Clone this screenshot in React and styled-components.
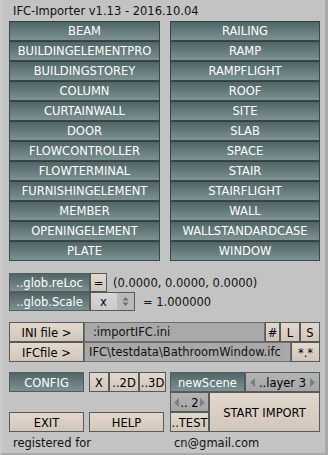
import styled, { createGlobalStyle, css } from 'styled-components';

const LEFT = [
  'BEAM', 'BUILDINGELEMENTPRO', 'BUILDINGSTOREY', 'COLUMN', 'CURTAINWALL', 'DOOR',
  'FLOWCONTROLLER', 'FLOWTERMINAL', 'FURNISHINGELEMENT', 'MEMBER', 'OPENINGELEMENT', 'PLATE',
];
const RIGHT = [
  'RAILING', 'RAMP', 'RAMPFLIGHT', 'ROOF', 'SITE', 'SLAB',
  'SPACE', 'STAIR', 'STAIRFLIGHT', 'WALL', 'WALLSTANDARDCASE', 'WINDOW',
];

const GlobalStyle = createGlobalStyle`
  html, body {
    margin: 0;
    padding: 0;
    background: #c3c3c3;
  }
  * {
    box-sizing: border-box;
  }
`;

const TONES = {
  teal: css`
    background: linear-gradient(#4f6566, #7c9192);
    color: #ffffff;
  `,
  beige: css`
    background: linear-gradient(#e3d8cd, #d2c6ba);
    color: #000000;
  `,
  gray: css`
    background: linear-gradient(#b4b4b4, #a6a6a6);
    color: #000000;
  `,
  light: css`
    background: linear-gradient(#d6d6d6, #cacaca);
    color: #000000;
  `,
};

const Panel = styled.div`
  width: 328px;
  height: 455px;
  background: #c3c3c3;
  border-left: 2px solid #cacaca;
  border-right: 3px solid #a9a9a9;
  border-bottom: 2px solid #a9a9a9;
  padding-left: 7px;
  font-family: 'DejaVu Sans', 'Liberation Sans', sans-serif;
  font-size: 11.5px;
  color: #111;
`;

const Title = styled.div`
  height: 21px;
  padding: 4px 0 0 4px;
  line-height: 14px;
`;

const ElementGrid = styled.div`
  display: grid;
  grid-template-columns: 151px 150px;
  column-gap: 10px;
`;

const Column = styled.div`
  display: flex;
  flex-direction: column;
`;

const ElemButton = styled.div`
  height: 20px;
  border: 1px solid #3a4748;
  border-top-color: #34403f;
  ${TONES.teal}
  text-align: center;
  line-height: 17px;
  padding-top: 1px;
  white-space: nowrap;
  overflow: hidden;
`;

const Btn = styled.div`
  position: relative;
  width: ${({ $w }) => $w}px;
  height: ${({ $h }) => $h || 20}px;
  flex: none;
  border: 1px solid #555a5a;
  ${({ $tone }) => TONES[$tone || 'beige']}
  display: flex;
  align-items: center;
  justify-content: ${({ $left }) => ($left ? 'flex-start' : 'center')};
  padding-top: 1px;
  white-space: nowrap;
  overflow: hidden;
`;

const Field = styled.div`
  width: ${({ $w }) => $w}px;
  height: 20px;
  flex: none;
  background: #a9a9a9;
  border: 1px solid #6e6e6e;
  padding: 1px 0 0 ${({ $pad }) => $pad}px;
  line-height: 17px;
  white-space: nowrap;
  overflow: hidden;
`;

const Row = styled.div`
  display: flex;
  align-items: center;
  height: ${({ $h }) => $h || 20}px;
  margin-top: ${({ $mt }) => $mt || 0}px;
  gap: ${({ $gap }) => $gap || 0}px;
`;

const Label = styled.span`
  margin-left: ${({ $ml }) => $ml}px;
  white-space: nowrap;
`;

const Bottom = styled.div`
  display: flex;
  gap: 4px;
  margin-top: 10px;
  height: 60px;
`;

const BottomLeft = styled.div`
  width: 157px;
  display: flex;
  flex-direction: column;
  justify-content: space-between;
`;

const BottomRight = styled.div`
  width: 150px;
  display: grid;
  grid-template-columns: 39px 36px 75px;
  grid-template-rows: 20px 20px 20px;
`;

const Cell = styled(Btn)`
  width: auto;
  height: auto;
  grid-column: ${({ $col }) => $col};
  grid-row: ${({ $row }) => $row};
`;

const Footer = styled.div`
  display: flex;
  padding: 4px 0 0 4px;
  line-height: 14px;
`;

const FooterText = styled.span`
  width: ${({ $w }) => $w}px;
`;

const DropText = styled.span`
  margin-left: 9px;
`;

const Spinner = styled.div`
  position: absolute;
  right: 0;
  top: 0;
  bottom: 0;
  width: 17px;
  background: #b9b9b9;
  display: flex;
  align-items: center;
  justify-content: center;
`;

const Arrow = ({ dir, x }) => (
  <svg
    width="6"
    height="9"
    viewBox="0 0 6 9"
    style={{ position: 'absolute', top: 5, [dir === 'left' ? 'left' : 'right']: x }}
  >
    {dir === 'left' ? (
      <polygon points="5,0 5,9 0,4.5" fill="#7f7f7f" />
    ) : (
      <polygon points="1,0 1,9 6,4.5" fill="#7f7f7f" />
    )}
  </svg>
);

export default function App() {
  return (
    <>
      <GlobalStyle />
      <Panel>
        <Title>IFC-Importer v1.13 - 2016.10.04</Title>
        <ElementGrid>
          <Column>
            {LEFT.map((n) => (
              <ElemButton key={n}>{n}</ElemButton>
            ))}
          </Column>
          <Column>
            {RIGHT.map((n) => (
              <ElemButton key={n}>{n}</ElemButton>
            ))}
          </Column>
        </ElementGrid>

        <Row $mt={12} $h={19}>
          <Btn $tone="teal" $w={81} $h={19}>..glob.reLoc</Btn>
          <Btn $w={17} $h={19}>=</Btn>
          <Label $ml={6}>(0.0000, 0.0000, 0.0000)</Label>
        </Row>
        <Row $h={19}>
          <Btn $tone="teal" $w={81} $h={19}>..glob.Scale</Btn>
          <Btn $tone="light" $w={45} $h={19} $left>
            <DropText>x</DropText>
            <Spinner>
              <svg width="7" height="11" viewBox="0 0 7 11">
                <polygon points="0.5,4.5 6.5,4.5 3.5,1" fill="#6e6e6e" />
                <polygon points="0.5,6.5 6.5,6.5 3.5,10" fill="#6e6e6e" />
              </svg>
            </Spinner>
          </Btn>
          <Label $ml={8}>= 1.000000</Label>
        </Row>

        <Row $mt={11}>
          <Btn $w={75}>INI file &gt;</Btn>
          <Field $w={181} $pad={8}>:importIFC.ini</Field>
          <Btn $w={15}>#</Btn>
          <Btn $w={20}>L</Btn>
          <Btn $w={20}>S</Btn>
        </Row>
        <Row>
          <Btn $w={75}>IFCfile &gt;</Btn>
          <Field $w={207} $pad={4}>IFC\testdata\BathroomWindow.ifc</Field>
          <Btn $w={29}>*.*</Btn>
        </Row>

        <Bottom>
          <BottomLeft>
            <Row>
              <Btn $tone="teal" $w={75}>CONFIG</Btn>
              <Btn $w={20} style={{ marginLeft: 5 }}>X</Btn>
              <Btn $w={30}>..2D</Btn>
              <Btn $w={27}>..3D</Btn>
            </Row>
            <Row $gap={5}>
              <Btn $w={75}>EXIT</Btn>
              <Btn $w={75}>HELP</Btn>
            </Row>
          </BottomLeft>
          <BottomRight>
            <Cell $tone="teal" $col="1 / 3" $row="1">newScene</Cell>
            <Cell $tone="gray" $col="3" $row="1">
              <Arrow dir="left" x={4} />
              ..layer 3
              <Arrow dir="right" x={4} />
            </Cell>
            <Cell $tone="gray" $col="1" $row="2">
              <Arrow dir="left" x={3} />
              .. 2
              <Arrow dir="right" x={3} />
            </Cell>
            <Cell $col="1" $row="3">..TEST</Cell>
            <Cell $col="2 / 4" $row="2 / 4">START IMPORT</Cell>
          </BottomRight>
        </Bottom>

        <Footer>
          <FooterText $w={161}>registered for</FooterText>
          <FooterText $w={150}>cn@gmail.com</FooterText>
        </Footer>
      </Panel>
    </>
  );
}
